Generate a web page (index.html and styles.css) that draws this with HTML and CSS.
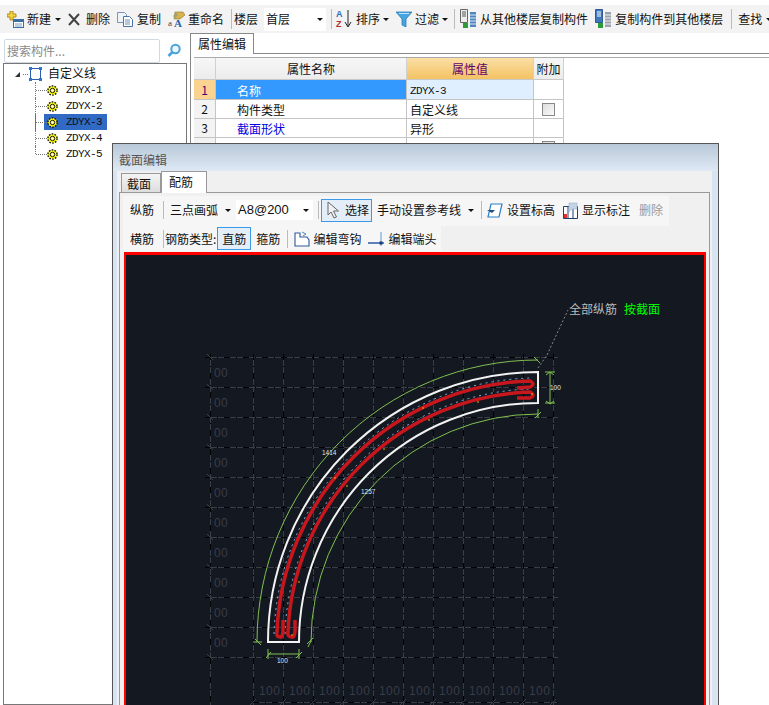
FILE: index.html
```html
<!DOCTYPE html>
<html lang="zh-CN">
<head>
<meta charset="utf-8">
<title>属性编辑</title>
<link rel="stylesheet" href="styles.css">
</head>
<body>

<div class="toolbar">
  <div class="tool t-new">
    <svg class="ico" width="17" height="17" viewBox="0 0 17 17"><path d="M3 0h3v3h3v3H6v3H3V6H0V3h3z" fill="#f5d33c" stroke="#b08a20"/><rect x="6.500" y="8.500" width="10" height="8" fill="#fff" stroke="#3a6ea5"/><path d="M7 9h9v2H7z" fill="#3a6ea5"/><path d="M8 13h7M8 15h7" stroke="#7a9cc0"/></svg>
    <span>新建</span><i class="caret"></i>
  </div>
  <div class="tool t-del">
    <svg class="ico" width="12" height="13" viewBox="0 0 12 13"><path d="M1 1l10 11M11 1L1 12" stroke="#444" stroke-width="2"/></svg>
    <span>删除</span>
  </div>
  <div class="tool t-copy">
    <svg class="ico" width="16" height="15" viewBox="0 0 16 15"><path d="M.5 .5h7l2 2v8H.5z" fill="#eef3f9" stroke="#7d95b0"/><path d="M6.500 4.500h6l3 3v7h-9z" fill="#fff" stroke="#4a74a8"/><path d="M8 8h5M8 10h5M8 12h5" stroke="#6d8fb8"/></svg>
    <span>复制</span>
  </div>
  <div class="tool t-rename">
    <svg class="ico" width="17" height="17" viewBox="0 0 17 17"><path d="M7 1h8l2 3-5 4H6z" fill="#d8b24a" stroke="#8a7330" stroke-width=".6"/><path d="M5 5l3-3 2 2-3 3z" fill="#98a37c"/><text x="0" y="15" class="ico-a">a</text><text x="6" y="16" class="ico-b">A</text></svg>
    <span>重命名</span>
  </div>
  <i class="sep"></i>
  <span class="floor">楼层</span>
  <div class="combo floor-combo"><span>首层</span><i class="caret"></i></div>
  <i class="sep sep-b"></i>
  <div class="tool t-sort">
    <svg class="ico" width="16" height="20" viewBox="0 0 16 20"><text x="0" y="8" class="ico-az blue">A</text><text x="0" y="18" class="ico-az red">Z</text><path d="M12 1v16M9 13l3 5 3-5" fill="none" stroke="#222"/></svg>
    <span>排序</span><i class="caret"></i>
  </div>
  <div class="tool t-filter">
    <svg class="ico" width="16" height="16" viewBox="0 0 16 16"><path d="M0 1h16l-6 7v8l-4-2V8z" fill="#46a5e0" stroke="#2f7fb8" stroke-width=".8"/><path d="M3 2.500h10" stroke="#bfe3f7"/></svg>
    <span>过滤</span><i class="caret"></i>
  </div>
  <i class="sep sep-c"></i>
  <div class="tool t-from">
    <svg class="ico" width="16" height="20" viewBox="0 0 16 20"><path d="M.5 .5h7v13h-7z" fill="#eee" stroke="#666"/><path d="M2 3h4M2 5h4M2 7h4" stroke="#555"/><rect x="3" y="14" width="5" height="5" fill="#2c9b3a"/><path d="M10 3h6v15h-6z" fill="#4f86c0"/><path d="M10 6h6M10 9h6M10 12h6M10 15h6" stroke="#dbe8f5"/></svg>
    <span>从其他楼层复制构件</span>
  </div>
  <div class="tool t-to">
    <svg class="ico" width="16" height="20" viewBox="0 0 16 20"><path d="M.5 .5h7v13h-7z" fill="#3f78bb" stroke="#2b5a94"/><path d="M2 3h4M2 5h4M2 7h4" stroke="#fff"/><rect x="3" y="14" width="5" height="5" fill="#2c9b3a"/><path d="M10 3h6v15h-6z" fill="#9aa3ad"/><path d="M10 6h6M10 9h6M10 12h6M10 15h6" stroke="#eee"/></svg>
    <span>复制构件到其他楼层</span>
  </div>
  <i class="sep sep-d"></i>
  <div class="tool t-find"><span>查找</span><i class="caret"></i></div>
</div>

<div class="main">
  <div class="side">
    <div class="search">
      <div class="search-input">搜索构件...</div>
      <svg width="16" height="16" viewBox="0 0 16 16"><circle cx="9.500" cy="6" r="4.200" fill="#eaf5fc" stroke="#4aa3da" stroke-width="2"/><path d="M6.500 9l-4 4" stroke="#4aa3da" stroke-width="2.600"/></svg>
    </div>
    <div class="tree">
      <div class="tree-root">
        <i class="arrow"></i>
        <i class="dots"></i>
        <svg width="13" height="14" viewBox="0 0 13 14"><rect x="1.500" y="1.500" width="10" height="11" fill="none" stroke="#2c5fb0"/><path d="M0 0h3v3H0zM10 0h3v3h-3zM0 11h3v3H0zM10 11h3v3h-3z" fill="#2f74d0"/></svg>
        <span>自定义线</span>
      </div>
      <ul class="tree-list">
        <li><svg class="gear" width="11" height="11" viewBox="0 0 11 11"><circle cx="5.500" cy="5.500" r="4.600" fill="#ff0" stroke="#111" stroke-width="1.400" stroke-dasharray="1.600 1.300"/><circle cx="5.500" cy="5.500" r="2.200" fill="#ffffa0" stroke="#111"/></svg><span>ZDYX-1</span></li>
        <li><svg class="gear" width="11" height="11" viewBox="0 0 11 11"><circle cx="5.500" cy="5.500" r="4.600" fill="#ff0" stroke="#111" stroke-width="1.400" stroke-dasharray="1.600 1.300"/><circle cx="5.500" cy="5.500" r="2.200" fill="#ffffa0" stroke="#111"/></svg><span>ZDYX-2</span></li>
        <li class="selected"><svg class="gear" width="11" height="11" viewBox="0 0 11 11"><circle cx="5.500" cy="5.500" r="4.600" fill="#ff0" stroke="#111" stroke-width="1.400" stroke-dasharray="1.600 1.300"/><circle cx="5.500" cy="5.500" r="2.200" fill="#ffffa0" stroke="#111"/></svg><span>ZDYX-3</span></li>
        <li><svg class="gear" width="11" height="11" viewBox="0 0 11 11"><circle cx="5.500" cy="5.500" r="4.600" fill="#ff0" stroke="#111" stroke-width="1.400" stroke-dasharray="1.600 1.300"/><circle cx="5.500" cy="5.500" r="2.200" fill="#ffffa0" stroke="#111"/></svg><span>ZDYX-4</span></li>
        <li><svg class="gear" width="11" height="11" viewBox="0 0 11 11"><circle cx="5.500" cy="5.500" r="4.600" fill="#ff0" stroke="#111" stroke-width="1.400" stroke-dasharray="1.600 1.300"/><circle cx="5.500" cy="5.500" r="2.200" fill="#ffffa0" stroke="#111"/></svg><span>ZDYX-5</span></li>
      </ul>
    </div>
  </div>

  <div class="props">
    <div class="tabstrip"><div class="prop-tab">属性编辑</div></div>
    <div class="grid">
      <div class="gh corner"></div><div class="gh">属性名称</div><div class="gh gh-val">属性值</div><div class="gh">附加</div>

      <div class="rh rh-on">1</div><div class="c c-name on">名称</div><div class="c c-val mono val-on">ZDYX-3</div><div class="c"></div>

      <div class="rh">2</div><div class="c c-name">构件类型</div><div class="c c-val">自定义线</div><div class="c c-chk"><i class="chk"></i></div>

      <div class="rh">3</div><div class="c c-name blue-t">截面形状</div><div class="c c-val">异形</div><div class="c"></div>

      <div class="rh"></div><div class="c"></div><div class="c"></div><div class="c c-chk"><i class="chk"></i></div>
    </div>
  </div>
</div>

<div class="dialog">
  <div class="dlg-title">截面编辑</div>
  <div class="dlg-body">
    <div class="dlg-tabs">
      <div class="dlg-tab">截面</div>
      <div class="dlg-tab active">配筋</div>
    </div>
    <div class="dlg-panel">
      <div class="bar bar-a">
        <span class="b-zong">纵筋</span>
        <i class="sep s1"></i>
        <span class="b-arc">三点画弧</span><i class="caret c1"></i>
        <div class="combo rebar-combo"><span>A8@200</span><i class="caret"></i></div>
        <i class="sep s2"></i>
        <div class="btn btn-select">
          <svg width="13" height="18" viewBox="0 0 13 18"><path d="M1 1v13l3-3 3 6 2.500-1-3-6h5z" fill="#eef2f6" stroke="#666"/></svg>
          <span>选择</span>
        </div>
        <span class="b-manual">手动设置参考线</span><i class="caret c2"></i>
        <i class="sep s3"></i>
        <div class="tool t-level">
          <svg width="16" height="15" viewBox="0 0 16 15"><path d="M4 1h11l-3 13H1z" fill="#fff" stroke="#2a7fc4" stroke-width="1.200"/><path d="M0 7h8l-3 3z" fill="#1d4f86"/></svg>
          <span>设置标高</span>
        </div>
        <div class="tool t-show">
          <svg width="15" height="17" viewBox="0 0 15 17"><path d="M.5 4.500h14v12H.5z" fill="#fff" stroke="#1f3f6e"/><path d="M5 5v11M10 5v11" stroke="#1f3f6e"/><path d="M6 1h8v6H9l-3 3z" fill="#c5d3e6" stroke="#9fb2c9" stroke-width=".6"/><rect x="1" y="12" width="3" height="4" fill="#d33"/></svg>
          <span>显示标注</span>
        </div>
        <span class="b-del">删除</span>
      </div>
      <div class="bar bar-b">
        <span class="b-zong">横筋</span>
        <i class="sep s1"></i>
        <span class="b-type">钢筋类型:</span>
        <div class="btn btn-straight">直筋</div>
        <span class="b-hoop">箍筋</span>
        <i class="sep s4"></i>
        <div class="tool t-hook">
          <svg width="16" height="16" viewBox="0 0 16 16"><path d="M1 2h5v4h7l2 3v6H1z" fill="#fff" stroke="#2f5a9a" stroke-width="1.100"/><path d="M8 1l4 2-3 2" fill="none" stroke="#4f86c0"/></svg>
          <span>编辑弯钩</span>
        </div>
        <div class="tool t-end">
          <svg width="16" height="16" viewBox="0 0 16 16"><path d="M0 12h16" stroke="#1d4f9c" stroke-width="1.400"/><path d="M13 1v14" stroke="#8fb4dc" stroke-width="1.400"/><rect x="11.500" y="10.500" width="3" height="3" fill="#123a78"/></svg>
          <span>编辑端头</span>
        </div>
      </div>
      <div class="canvas">
        <svg class="drawing" width="578" height="450" viewBox="126 255 578 450">
          <path class="grid-line" d="M210 354V705M253 354V705M283 354V705M313 354V705M343 354V705M373 354V705M403 354V705M433 354V705M463 354V705M493 354V705M523 354V705M553 354V705M205 357H558M205 387H558M205 417H558M205 447H558M205 477H558M205 507H558M205 537H558M205 567H558M205 597H558M205 627H558M205 657H558M253 702H558"/>
          <path class="grid-dash" d="M210 354V705M253 354V705M283 354V705M313 354V705M343 354V705M373 354V705M403 354V705M433 354V705M463 354V705M493 354V705M523 354V705M553 354V705M205 357H558M205 387H558M205 417H558M205 447H558M205 477H558M205 507H558M205 537H558M205 567H558M205 597H558M205 627H558M205 657H558M253 702H558"/>
          <path class="grid-tick" d="M207 354l6 6M207 384l6 6M207 414l6 6M207 444l6 6M207 474l6 6M207 504l6 6M207 534l6 6M207 564l6 6M207 594l6 6M207 624l6 6M207 654l6 6M250 705l6-6M280 705l6-6M310 705l6-6M340 705l6-6M370 705l6-6M400 705l6-6M430 705l6-6M460 705l6-6M490 705l6-6M520 705l6-6M550 705l6-6"/>
          <g class="axis-text">
            <text x="214" y="377">00</text><text x="214" y="407">00</text><text x="214" y="437">00</text><text x="214" y="467">00</text><text x="214" y="497">00</text><text x="214" y="527">00</text><text x="214" y="557">00</text><text x="214" y="587">00</text><text x="214" y="617">00</text><text x="214" y="647">00</text>
            <text x="259" y="695">100</text><text x="289" y="695">100</text><text x="319" y="695">100</text><text x="349" y="695">100</text><text x="379" y="695">100</text><text x="409" y="695">100</text><text x="439" y="695">100</text><text x="469" y="695">100</text><text x="499" y="695">100</text><text x="529" y="695">100</text>
          </g>
          <path class="green" d="M257 642A281 282 0 0 1 538 360"/>
          <path class="green" d="M311 642A227 228 0 0 1 538 414"/>
          <path class="green" d="M253 642h9M255 639l6 6M311 641l-3 6M313 638l-6 6M534 357l6 6M538 409v9M535 418l6-6M550 372v32M545 372h10M545 403h10M546 375l4-3 4 3M546 401l4 3 4-3M268 654h31M268 649v10M299 649v10M266 658l5-6M296 658l6-6"/>
          <path class="white" d="M268 642H299A239 239 0 0 1 538 403V372A270 270 0 0 0 268 642Z"/>
          <path class="stirrup" d="M274 634A264 264 0 0 1 530 378M285 634A253 253 0 0 1 530 389"/>
          <path class="rebar" d="M283 620V632Q282 638 280 637Q276 637 277 632A261 261 0 0 1 530 381Q536 384 530 387L517 388"/>
          <path class="rebar" d="M295 620V632Q294 638 292 637Q287 637 288 632A250 250 0 0 1 530 392Q536 395 530 398L517 398"/>
          <path class="marks" d="M422 408h2M428 420h2M383 449h2M334 478h2M346 486h2M291 635h2M298 582h2M531 394h2M477 402h2"/>
          <path class="leader" d="M538 368L547 355L568 310"/>
          <g class="dim-text">
            <text x="322" y="455">1414</text><text x="361" y="494">1257</text><text x="550" y="389.500">100</text><text x="277" y="663">100</text>
          </g>
          <text class="lbl" x="569" y="314">全部纵筋</text>
          <text class="lbl lbl-g" x="624" y="314">按截面</text>
        </svg>
      </div>
    </div>
  </div>
</div>

</body>
</html>
```

FILE: styles.css
```css
* {
  box-sizing: border-box;
}

html, body {
  margin: 0;
  padding: 0;
  height: 100%;
  overflow: hidden;
}

body {
  position: relative;
  background: #fff;
  color: #111;
  font: 12px/16px "Noto Sans CJK SC", "Liberation Sans", sans-serif;
}

i {
  display: block;
  flex: none;
}

.mono {
  font-family: "Liberation Mono", monospace;
  font-size: 11px;
  letter-spacing: -.6px;
}

/* top toolbar */
.toolbar {
  display: flex;
  align-items: center;
  height: 28px;
  margin-top: 5px;
  padding-left: 7px;
  background: #f3f3f3;
  white-space: nowrap;
  overflow: hidden;
}

.tool {
  display: flex;
  align-items: center;
  flex: none;
}

.ico {
  flex: none;
}

.ico-a { font: 9px "Liberation Serif", serif; fill: #444; }
.ico-b { font: bold 11px "Liberation Serif", serif; fill: #2a5fa8; }
.ico-az { font: bold 9px "Liberation Sans", sans-serif; }
.blue { fill: #2a6fc0; }
.red { fill: #b03030; }

.caret {
  width: 0;
  height: 0;
  border-left: 3px solid transparent;
  border-right: 3px solid transparent;
  border-top: 3px solid #111;
}

.sep {
  width: 1px;
  height: 20px;
  background: #bbb;
}

.t-new { gap: 3px; }
.t-new .caret { margin-left: 1px; }
.t-del { gap: 6px; margin-left: 7px; }
.t-copy { gap: 4px; margin-left: 7px; }
.t-rename { gap: 3px; margin-left: 7px; }
.toolbar > .sep { margin-left: 7px; }
.floor { margin-left: 2px; }

.combo {
  display: flex;
  align-items: center;
  justify-content: space-between;
  background: #fff;
  flex: none;
}

.floor-combo {
  width: 62px;
  height: 23px;
  margin-left: 6px;
  padding: 0 3px 0 2px;
}

.toolbar > .sep-b { margin-left: 5px; }
.t-sort { gap: 4px; margin-left: 4px; }
.t-sort .caret { margin-left: -1px; }
.t-filter { gap: 3px; margin-left: 7px; }
.toolbar > .sep-c { margin-left: 6px; }
.t-from { gap: 4px; margin-left: 5px; }
.t-to { gap: 4px; margin-left: 7px; }
.toolbar > .sep-d { margin-left: 8px; }
.t-find { gap: 4px; margin-left: 6px; }

/* left tree and property grid */
.main {
  display: flex;
  height: 672px;
}

.side {
  flex: none;
  width: 187px;
  margin-left: 3px;
  padding-top: 5px;
  display: flex;
  flex-direction: column;
}

.search {
  display: flex;
  align-items: center;
  gap: 6px;
  height: 25px;
  padding-left: 1px;
}

.search-input {
  width: 156px;
  height: 24px;
  padding: 3px 2px;
  border: 1px solid #cfd8e3;
  border-radius: 2px;
  background: #fff;
  color: #8a8a8a;
}

.tree {
  flex: 1;
  width: 184px;
  border: 1px solid #777;
  padding-top: 2px;
}

.tree-root {
  display: flex;
  align-items: center;
  height: 16px;
  padding-left: 11px;
}

.arrow {
  width: 0;
  height: 0;
  border-bottom: 5px solid #333;
  border-left: 5px solid transparent;
}

.dots {
  width: 5px;
  margin: 0 1px 0 3px;
  border-top: 1px dotted #777;
}

.tree-root span {
  margin-left: 6px;
  padding-bottom: 2px;
}

.tree-list {
  list-style: none;
  margin: 0 0 0 31px;
  padding: 0;
  width: 72px;
}

.tree-list li {
  position: relative;
  display: flex;
  align-items: center;
  height: 16px;
  padding-left: 11px;
  font: 11px/16px "Liberation Mono", monospace;
  letter-spacing: -.6px;
  color: #111;
  border-left: 1px dotted #777;
}

.tree-list li:last-child {
  height: 16px;
  border-left-color: transparent;
}

.tree-list li span {
  margin-left: 8px;
}

.tree-list li::before {
  content: "";
  position: absolute;
  left: 0;
  top: 8px;
  width: 11px;
  border-top: 1px dotted #777;
}

.tree-list li:last-child::after {
  content: "";
  position: absolute;
  left: -1px;
  top: 0;
  height: 8px;
  border-left: 1px dotted #777;
}

.tree-list li.selected {
  background: linear-gradient(to right, transparent 8px, #316ac5 8px);
}

.gear {
  flex: none;
}

.props {
  flex: 1;
  margin-left: 0;
  border-left: 1px solid #888;
  min-width: 0;
}

.tabstrip {
  height: 21px;
  border-bottom: 1px solid #888;
}

.prop-tab {
  width: 63px;
  height: 21px;
  padding: 2px 0 0 7px;
  border: 1px solid #888;
  border-bottom: 0;
  border-left: 0;
  background: #fff;
}

.grid {
  display: grid;
  grid-template-columns: 22px 191px 127px 30px;
  grid-auto-rows: 19px;
  grid-template-rows: 22px 20px;
  margin: 3px 0 0 3px;
  border-top: 1px solid #aaa;
  width: 575px;
}

.gh {
  display: flex;
  align-items: center;
  justify-content: center;
  background: linear-gradient(#f7f7f7, #ececec);
  border-right: 1px solid #d0d0d0;
  border-bottom: 1px solid #c8c8c8;
}

.gh-val {
  background: linear-gradient(#fbdfa5, #f3c263);
  color: #63006b;
}

.rh {
  display: flex;
  align-items: center;
  justify-content: center;
  background: #f3f3f3;
  border-right: 1px solid #c4c4c4;
  border-bottom: 1px solid #c4c4c4;
}

.rh-on {
  background: #fbd391;
  color: #4a0070;
}

.c {
  display: flex;
  align-items: center;
  padding: 2px 0 0 3px;
  border-right: 1px solid #c4c4c4;
  border-bottom: 1px solid #c4c4c4;
}

.c-name {
  padding-left: 21px;
}

.on {
  background: #3399ff;
  color: #fff;
}

.val-on {
  background: #dfefff;
}

.blue-t {
  color: #0000e0;
}

.c-chk {
  justify-content: center;
  padding: 0;
}

.chk {
  width: 13px;
  height: 13px;
  border: 1px solid #888;
  background: linear-gradient(135deg, #ddd, #fafafa);
}

/* dialog over the page */
.dialog {
  position: absolute;
  left: 112px;
  top: 143px;
  width: 607px;
  height: 562px;
  border: 1px solid #555;
  border-bottom: 0;
  background: #d9e4f2;
  display: flex;
  flex-direction: column;
}

.dlg-title {
  flex: none;
  height: 27px;
  padding: 8px 0 0 6px;
  background: linear-gradient(#b8c8d8, #dfe9f5);
  color: #555;
}

.dlg-body {
  flex: 1;
  margin: 0 6px 0 4px;
  background: #f0f0f0;
  display: flex;
  flex-direction: column;
  min-height: 0;
}

.dlg-tabs {
  flex: none;
  display: flex;
  align-items: flex-end;
  height: 21px;
  padding-left: 4px;
}

.dlg-tab {
  width: 40px;
  height: 19px;
  padding: 2px 0 0 5px;
  border: 1px solid #999;
  border-bottom: 0;
  background: linear-gradient(#f4f4f4, #ddd);
}

.dlg-tab.active {
  width: 46px;
  height: 22px;
  margin-bottom: -1px;
  padding: 2px 0 0 7px;
  background: #fff;
  position: relative;
  z-index: 1;
}

.dlg-panel {
  flex: 1;
  margin-left: 2px;
  margin-right: 2px;
  border: 1px solid #999;
  border-bottom: 0;
  padding: 3px 1px 0 3px;
  display: flex;
  flex-direction: column;
  min-height: 0;
  background: #f0f0f0;
}

.bar {
  flex: none;
  display: flex;
  align-items: center;
  background: #f6f6f6;
  padding-left: 7px;
  white-space: nowrap;
}

.bar-a {
  width: 546px;
  height: 30px;
  padding-bottom: 2px;
}

.bar-b {
  width: 318px;
  height: 25px;
}

.bar .sep {
  height: 18px;
}

.bar .s1 { margin-left: 9px; }
.b-arc { margin-left: 6px; }
.c1 { margin-left: 7px; }

.rebar-combo {
  width: 77px;
  height: 20px;
  margin-left: 5px;
  padding: 0 4px 0 2px;
  font-family: "Liberation Sans", sans-serif;
  font-size: 13px;
}

.bar .s2 { margin-left: 5px; }

.btn {
  display: flex;
  align-items: center;
  flex: none;
  border: 1px solid #3b9ae8;
  background: #e3eef9;
}

.btn-select {
  width: 51px;
  height: 23px;
  margin-left: 2px;
  padding-left: 5px;
  gap: 5px;
}

.b-manual { margin-left: 5px; }
.c2 { margin-left: 7px; }
.bar .s3 { margin-left: 7px; }
.t-level { gap: 4px; margin-left: 5px; }
.t-show { gap: 4px; margin-left: 8px; }
.b-del { margin-left: 9px; color: #999; }

.b-type { margin-left: 1px; }

.btn-straight {
  width: 34px;
  height: 23px;
  margin-left: 1px;
  justify-content: center;
}

.b-hoop { margin-left: 5px; }
.bar .s4 { margin-left: 7px; }
.t-hook { gap: 3px; margin-left: 6px; }
.t-end { gap: 4px; margin-left: 7px; }

.canvas {
  flex: 1;
  min-height: 0;
  width: 582px;
  margin-top: 1px;
  margin-left: 1px;
  border: 2px solid #f00;
  border-top-width: 3px;
  border-bottom: 0;
  background: #141821;
  overflow: hidden;
}

.drawing {
  display: block;
}

/* drawing strokes */
.drawing path {
  fill: none;
}

.grid-line {
  stroke: #3a3e48;
  stroke-width: 1;
  shape-rendering: crispEdges;
}

.grid-dash {
  stroke: #000;
  stroke-width: 1;
  stroke-dasharray: 6 6 1 6;
  shape-rendering: crispEdges;
}

.grid-tick {
  stroke: #3a3e48;
}

.axis-text {
  font: 12px "Liberation Sans", sans-serif;
  letter-spacing: .4px;
  fill: #383c47;
}

.drawing .green {
  stroke: #80c050;
}

.drawing .white {
  stroke: #f2f2f2;
  stroke-width: 2;
}

.drawing .stirrup {
  stroke: #7fb8e8;
  stroke-dasharray: 2 4;
}

.drawing .rebar {
  stroke: #c8161d;
  stroke-width: 3.500;
}

.drawing .marks {
  stroke: #e8b000;
}

.drawing .leader {
  stroke: #888;
  stroke-dasharray: 2 2;
}

.dim-text {
  font: 6.500px "Liberation Sans", sans-serif;
  fill: #dfe8f5;
}

.lbl {
  font: 12px "Noto Sans CJK SC", sans-serif;
  fill: #bbb;
}

.lbl-g {
  fill: #00ff00;
}
```
